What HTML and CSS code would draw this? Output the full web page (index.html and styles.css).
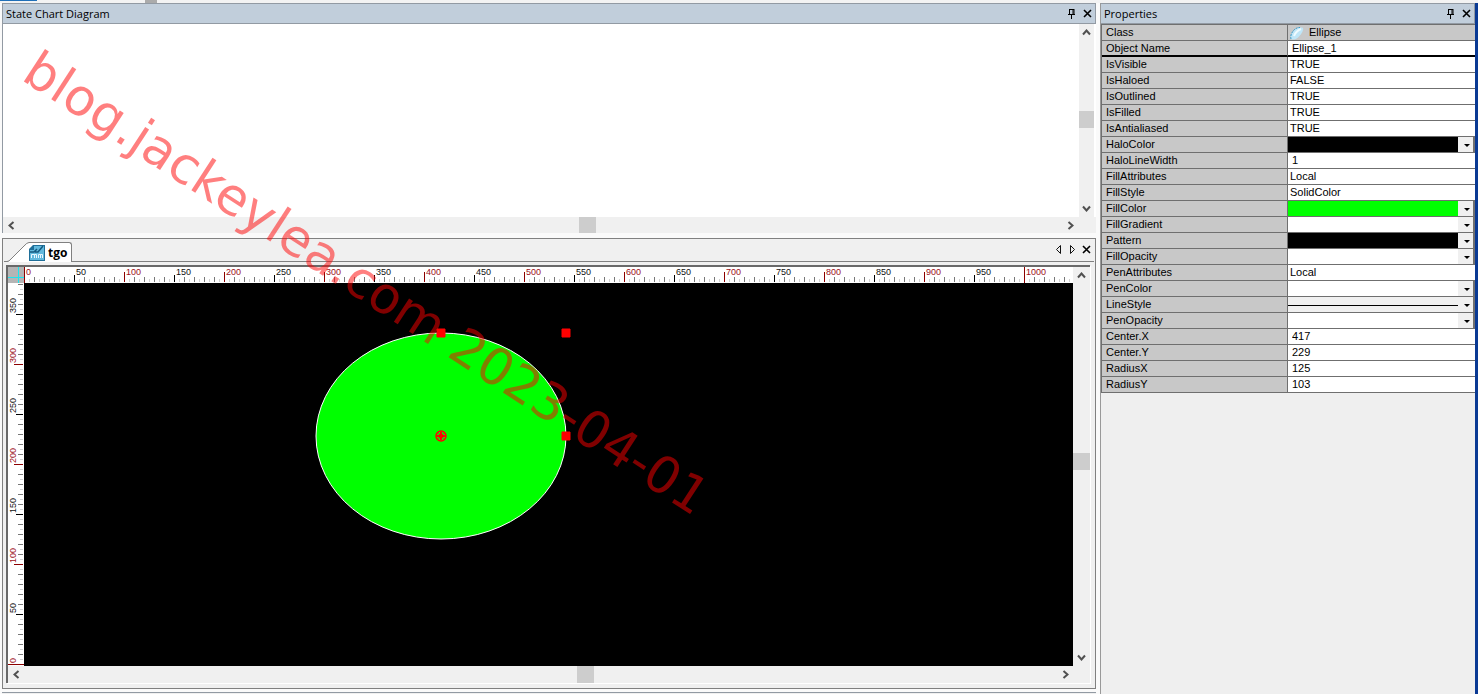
FILE: index.html
```html
<!DOCTYPE html>
<html lang="en">
<head>
<meta charset="utf-8">
<title>State Chart Diagram</title>
<link rel="stylesheet" href="styles.css">
</head>
<body>
<div class="strip"><span class="strip-active"></span><span class="strip-grip"></span></div>
<div class="workspace">
  <main class="left">
    <section class="chart">
      <header class="titlebar">
        <h2>State Chart Diagram</h2>
        <button class="icon-btn" aria-label="Pin diagram"><svg width="9" height="11" viewBox="0 0 9 11"><path d="M2.500 1v5M2 1.500h5M6 1v5M7 1v5M1 6.500h7M4.500 7v4" class="ink"/></svg></button>
        <button class="icon-btn" aria-label="Close diagram"><svg width="9" height="9" viewBox="0 0 9 9"><path d="M1 1l7 7M8 1l-7 7" class="ink thick"/></svg></button>
      </header>
      <div class="chart-body">
        <div class="chart-page"></div>
        <div class="vbar">
          <button aria-label="Scroll chart up"><svg width="9" height="7" viewBox="0 0 9 7"><path d="M1 5.500l3.500-4 3.500 4" class="chev"/></svg></button>
          <i class="v-before"></i><i class="thumb"></i><i class="v-after"></i>
          <button aria-label="Scroll chart down"><svg width="9" height="7" viewBox="0 0 9 7"><path d="M1 1.500l3.500 4 3.500-4" class="chev"/></svg></button>
        </div>
      </div>
      <div class="hbar chart-hbar">
        <button aria-label="Scroll chart left"><svg width="7" height="9" viewBox="0 0 7 9"><path d="M5.500 1l-4 3.500 4 3.500" class="chev"/></svg></button>
        <i class="h-before"></i><i class="thumb"></i><i class="h-after"></i>
        <button aria-label="Scroll chart right"><svg width="7" height="9" viewBox="0 0 7 9"><path d="M1.500 1l4 3.500-4 3.500" class="chev"/></svg></button>
      </div>
    </section>

    <section class="editor">
      <div class="tabs">
        <button class="tab">
          <svg class="tab-slope" width="22" height="20" viewBox="0 0 22 20"><path d="M0 20L2 19 17 4Q19 1 22 1V20Z" fill="#fff"/><path d="M0 19.500Q2 19.500 4 17L17 4Q20 .5 22 .5" fill="none" stroke="#808080"/></svg>
          <span class="tab-face">
            <svg width="16" height="16" viewBox="0 0 16 16"><path d="M0 4l4-4h12v16H0z" fill="#1f6f99"/><path d="M1 5h4V1h10v14H1z" fill="#62b9dd"/><path d="M1 7h4l3-3M6 7h3l5-6" fill="none" stroke="#145a80" stroke-width="1.500"/><path d="M2.500 13V9.500h3V13M5.500 9.500h2V13M9.500 13V9.500h2V13M11.500 9.500h2V13" fill="none" stroke="#e8f7ff"/></svg>
            <span>tgo</span>
          </span>
        </button>
        <span class="tab-fill"></span>
        <button class="nav-btn" aria-label="Previous tab"><svg width="7" height="9" viewBox="0 0 7 9"><path d="M5.500 .5v8l-4-4z" fill="none" stroke="#111"/></svg></button>
        <button class="nav-btn" aria-label="Next tab"><svg width="7" height="9" viewBox="0 0 7 9"><path d="M1.500 .5v8l4-4z" fill="none" stroke="#111"/></svg></button>
        <button class="nav-btn" aria-label="Close tab"><svg width="9" height="9" viewBox="0 0 9 9"><path d="M1 1l7 7M8 1l-7 7" class="ink thick"/></svg></button>
      </div>
      <div class="frame">
        <svg class="corner" width="16" height="16" viewBox="0 0 16 16"><rect width="16" height="16" fill="#b5b5b5"/><path d="M10.500 0v16M0 10.500h16" stroke="#1ce6ee"/></svg>
        <svg class="ruler-x" height="16">
          <defs><pattern id="tx" width="100" height="16" patternUnits="userSpaceOnUse">
            <path d="M5.500 12v3M15.500 12v3M25.500 12v3M35.500 12v3M45.500 12v3M55.500 12v3M65.500 12v3M75.500 12v3M85.500 12v3M95.500 12v3" stroke="#d0d0d0"/>
            <path d="M10.500 10v5M20.500 10v5M30.500 10v5M40.500 10v5M60.500 10v5M70.500 10v5M80.500 10v5M90.500 10v5" stroke="#777"/>
            <path d="M50.500 8v7" stroke="#000"/><path d="M.5 5v10" stroke="#8b0000"/>
          </pattern></defs>
          <rect width="100%" height="16" fill="#fff"/><rect width="100%" height="16" fill="url(#tx)"/>
          <path d="M.5 0v16M1000.500 0v16" stroke="#8b0000"/>
          <g class="num"><text x="52" y="8">50</text><text x="152" y="8">150</text><text x="252" y="8">250</text><text x="352" y="8">350</text><text x="452" y="8">450</text><text x="552" y="8">550</text><text x="652" y="8">650</text><text x="752" y="8">750</text><text x="852" y="8">850</text><text x="952" y="8">950</text></g>
          <g class="num major"><text x="2" y="8">0</text><text x="102" y="8">100</text><text x="202" y="8">200</text><text x="302" y="8">300</text><text x="402" y="8">400</text><text x="502" y="8">500</text><text x="602" y="8">600</text><text x="702" y="8">700</text><text x="802" y="8">800</text><text x="902" y="8">900</text><text x="1002" y="8">1000</text></g>
        </svg>
        <div class="vbar frame-vbar">
          <button aria-label="Scroll canvas up"><svg width="9" height="7" viewBox="0 0 9 7"><path d="M1 5.500l3.500-4 3.500 4" class="chev"/></svg></button>
          <i class="v-before"></i><i class="thumb"></i><i class="v-after"></i>
          <button aria-label="Scroll canvas down"><svg width="9" height="7" viewBox="0 0 9 7"><path d="M1 1.500l3.500 4 3.500-4" class="chev"/></svg></button>
        </div>
        <svg class="ruler-y" width="16">
          <defs><pattern id="ty" y="81" width="16" height="100" patternUnits="userSpaceOnUse">
            <path d="M12 5.500h3M12 15.500h3M12 25.500h3M12 35.500h3M12 45.500h3M12 55.500h3M12 65.500h3M12 75.500h3M12 85.500h3M12 95.500h3" stroke="#d0d0d0"/>
            <path d="M10 10.500h5M10 20.500h5M10 30.500h5M10 40.500h5M10 60.500h5M10 70.500h5M10 80.500h5M10 90.500h5" stroke="#777"/>
            <path d="M8 50.500h7" stroke="#000"/><path d="M6 .5h9" stroke="#8b0000"/>
          </pattern></defs>
          <rect width="16" height="100%" fill="#fff"/><rect width="16" height="100%" fill="url(#ty)"/>
          <path d="M0 381.500h16" stroke="#8b0000"/>
          <g class="num" transform="rotate(-90)"><text x="-30" y="8">350</text><text x="-130" y="8">250</text><text x="-230" y="8">150</text><text x="-330" y="8">50</text></g>
          <g class="num major" transform="rotate(-90)"><text x="-80" y="8">300</text><text x="-180" y="8">200</text><text x="-280" y="8">100</text><text x="-380" y="8">0</text></g>
        </svg>
        <svg class="canvas" role="img" aria-label="Green ellipse">
          <ellipse cx="417" cy="153" rx="125" ry="103" fill="#0f0" stroke="#fff"/>
          <path d="M413 46h8v8h-8zM538 46h8v8h-8zM538 149h8v8h-8z" fill="#f00" stroke="#f00"/>
          <circle cx="417" cy="153" r="5" fill="#0f0" stroke="#f00" stroke-width="1.500"/>
          <path d="M417 149v8M413 153h8" stroke="#f00" stroke-width="2"/>
          <path d="M414.500 150.500l5 5M419.500 150.500l-5 5" stroke="#f00"/>
        </svg>
        <div class="hbar frame-hbar">
          <button aria-label="Scroll canvas left"><svg width="7" height="9" viewBox="0 0 7 9"><path d="M5.500 1l-4 3.500 4 3.500" class="chev"/></svg></button>
          <i class="h-before"></i><i class="thumb"></i><i class="h-after"></i>
          <button aria-label="Scroll canvas right"><svg width="7" height="9" viewBox="0 0 7 9"><path d="M1.500 1l4 3.500-4 3.500" class="chev"/></svg></button>
        </div>
      </div>
    </section>
    <div class="next-panel"></div>
  </main>

  <aside class="props">
    <header class="titlebar">
      <h2>Properties</h2>
      <button class="icon-btn" aria-label="Pin properties"><svg width="9" height="11" viewBox="0 0 9 11"><path d="M2.500 1v5M2 1.500h5M6 1v5M7 1v5M1 6.500h7M4.500 7v4" class="ink"/></svg></button>
      <button class="icon-btn" aria-label="Close properties"><svg width="9" height="9" viewBox="0 0 9 9"><path d="M1 1l7 7M8 1l-7 7" class="ink thick"/></svg></button>
    </header>
    <table>
      <tr><th scope="row">Class</th><td class="shade"><span class="class-cell"><svg width="14" height="14" viewBox="0 0 14 14"><path d="M1 13C-.5 9 4 1 12 1.500 15 2 12 8 8 11.500 5 14 2 14 1 13z" fill="#bfe6f8"/><path d="M1 13C-.5 9 4 1 10 1.500" fill="none" stroke="#3a9dcc" stroke-dasharray="2 1"/><path d="M4 10Q6 5 11 3" stroke="#effbff" stroke-width="2" fill="none"/></svg>Ellipse</span></td></tr>
      <tr class="keyline"><th scope="row"><label for="name">Object Name</label></th><td><input id="name" type="text" value="Ellipse_1"></td></tr>
      <tr><th scope="row">IsVisible</th><td>TRUE</td></tr>
      <tr><th scope="row">IsHaloed</th><td>FALSE</td></tr>
      <tr><th scope="row">IsOutlined</th><td>TRUE</td></tr>
      <tr><th scope="row">IsFilled</th><td>TRUE</td></tr>
      <tr><th scope="row">IsAntialiased</th><td>TRUE</td></tr>
      <tr><th scope="row"><label for="halo">HaloColor</label></th><td class="combo"><select id="halo" class="black"><option></option></select></td></tr>
      <tr><th scope="row"><label for="halow">HaloLineWidth</label></th><td><input id="halow" type="text" value="1"></td></tr>
      <tr><th scope="row">FillAttributes</th><td>Local</td></tr>
      <tr><th scope="row">FillStyle</th><td>SolidColor</td></tr>
      <tr><th scope="row"><label for="fill">FillColor</label></th><td class="combo"><select id="fill" class="green"><option></option></select></td></tr>
      <tr><th scope="row"><label for="grad">FillGradient</label></th><td class="combo"><select id="grad"><option></option></select></td></tr>
      <tr><th scope="row"><label for="pat">Pattern</label></th><td class="combo"><select id="pat" class="black"><option></option></select></td></tr>
      <tr><th scope="row"><label for="fop">FillOpacity</label></th><td class="combo"><select id="fop"><option></option></select></td></tr>
      <tr><th scope="row">PenAttributes</th><td>Local</td></tr>
      <tr><th scope="row"><label for="pen">PenColor</label></th><td class="combo"><select id="pen"><option></option></select></td></tr>
      <tr><th scope="row"><label for="line">LineStyle</label></th><td class="combo"><select id="line" class="line"><option></option></select></td></tr>
      <tr><th scope="row"><label for="pop">PenOpacity</label></th><td class="combo"><select id="pop"><option></option></select></td></tr>
      <tr><th scope="row"><label for="cx">Center.X</label></th><td><input id="cx" type="text" value="417"></td></tr>
      <tr><th scope="row"><label for="cy">Center.Y</label></th><td><input id="cy" type="text" value="229"></td></tr>
      <tr><th scope="row"><label for="rx">RadiusX</label></th><td><input id="rx" type="text" value="125"></td></tr>
      <tr><th scope="row"><label for="ry">RadiusY</label></th><td><input id="ry" type="text" value="103"></td></tr>
    </table>
  </aside>
</div>
<svg class="watermark"><text transform="translate(20 79) rotate(33)">blog.jackeylea.com 2023-04-01</text></svg>
</body>
</html>
```
FILE: styles.css
```css
* { box-sizing: border-box; }
body {
  margin: 0;
  height: 100vh;
  display: flex;
  flex-direction: column;
  overflow: hidden;
  background: #fafafa;
  color: #000;
  font: 11px/15px "Liberation Sans", Arial, sans-serif;
}
button { border: 0; padding: 0; background: none; color: inherit; display: flex; align-items: center; justify-content: center; }
svg { display: block; flex: none; }
.ink { fill: none; stroke: #000; }
.thick { stroke-width: 1.6; }
.chev { fill: none; stroke: #505050; stroke-width: 2; }

.strip { height: 3px; flex: none; display: flex; background: #f3f3f3; }
.strip-active { width: 37px; height: 1px; background: #1f6fb8; margin-right: 108px; }
.strip-grip { width: 12px; background: #ababab; }

.workspace {
  flex: 1;
  min-height: 0;
  display: flex;
  gap: 4px;
  padding-left: 2px;
  border-right: 3px solid #0a3a94;
}
.left { flex: 1094 1 0; min-width: 0; display: flex; flex-direction: column; }
.props { flex: 374 1 0; min-width: 0; background: #efefef; border-left: 1px solid #999; }

.titlebar {
  height: 21px;
  flex: none;
  display: flex;
  align-items: center;
  gap: 7px;
  padding: 0 3px;
  background: #c1cedb;
  border: 1px solid #929aa3;
  border-width: 1px 1px 1px 0;
}
.titlebar h2 { flex: 1; margin: 0; font: 11px/18px "Open Sans", "Noto Sans", sans-serif; }
.icon-btn { width: 9px; height: 18px; }

.chart { flex: 231 1 0; min-height: 0; display: flex; flex-direction: column; border-left: 1px solid #929aa3; }
.chart-body { flex: 1; min-height: 0; display: flex; background: #fff; padding-right: 2px; }
.chart-page { flex: 1; }
.vbar { width: 15px; display: flex; flex-direction: column; background: #f0f0f0; }
.vbar button { height: 17px; flex: none; }
.vbar .thumb { height: 17px; }
.hbar { height: 16px; flex: none; display: flex; background: #f0f0f0; }
.hbar button { width: 16px; flex: none; }
.hbar .thumb { width: 17px; }
.thumb { flex: none; background: #cdcdcd; }
.h-before { flex: 560 1 0; }
.h-after { flex: 466 1 0; }
.v-before { flex: 70 1 0; }
.v-after { flex: 72 1 0; }
.chart-hbar { padding-right: 18px; }

.editor {
  flex: 442 1 0;
  min-height: 0;
  margin-top: 5px;
  display: flex;
  flex-direction: column;
  border: 1px solid #808080;
  background: #f0f0f0;
  padding: 3px 1px 5px;
}
.tabs { height: 20px; flex: none; display: flex; align-items: stretch; margin-bottom: 3px; border-bottom: 1px solid #808080; }
.tab { align-items: stretch; height: 20px; margin-left: 3px; }
.tab-face {
  display: flex;
  align-items: center;
  gap: 3px;
  padding: 0 4px 0 0;
  border: 1px solid #808080;
  border-width: 1px 1px 0 0;
  border-radius: 0 3px 0 0;
  background: #fff;
  font: bold 12px/18px "Open Sans", "Noto Sans", sans-serif;
}
.tab-fill { flex: 1; }
.nav-btn { width: 14px; height: 14px; }
.nav-btn:last-child { margin-right: 1px; }

.frame {
  flex: 1;
  min-height: 0;
  margin: 0 4px 0 2px;
  display: grid;
  grid-template: 16px minmax(0, 1fr) 17px / 16px minmax(0, 1fr) 17px;
  border: solid #696969;
  border-width: 2px 0 0 2px;
  box-shadow: 1px 1px 0 #fff;
}
.ruler-x { width: 100%; }
.ruler-y { grid-column: 1; grid-row: 2; height: 100%; }
.frame-vbar { grid-column: 3; grid-row: 1 / 3; width: 17px; }
.frame-vbar .v-before { flex: 168 1 0; }
.frame-vbar .v-after { flex: 179 1 0; }
.canvas { grid-column: 2; grid-row: 2; width: 100%; height: 100%; background: #000; }
.frame-hbar { grid-column: 1 / 4; grid-row: 3; height: 17px; padding-right: 17px; }
.frame-hbar .h-before { flex: 553 1 0; }
.frame-hbar .h-after { flex: 463 1 0; }
.num { font: 9px "Liberation Sans", Arial, sans-serif; fill: #111; }
.major { fill: #9b1020; }
.next-panel { height: 2px; margin-top: 3px; flex: none; background: #f0f0f0; border-top: 1px solid #929aa3; }

table { width: 100%; table-layout: fixed; border-collapse: separate; border-spacing: 0; border: 1px solid #6f6f6f; border-width: 1px 0 0 1px; background: #fff; }
th, td { height: 16px; padding: 0 2px; border-bottom: 1px solid #6f6f6f; text-align: left; font-weight: normal; white-space: nowrap; }
th { width: 186px; padding-left: 4px; background: #c8c8c8; border-right: 1px solid #6f6f6f; }
label { display: block; }
.shade { background: #c8c8c8; }
.class-cell { display: flex; gap: 5px; height: 15px; align-items: center; }
.keyline th, .keyline td { border-bottom: 2px solid #000; line-height: 14px; }
input { display: block; width: 100%; height: 14px; padding: 0 2px; border: 0; background: none; font: inherit; color: inherit; }
.combo { padding: 0; position: relative; }
select { appearance: none; display: block; width: calc(100% - 15px); height: 15px; border: 0; border-radius: 0; padding: 0; background: #fff; }
.combo::before { content: ""; position: absolute; right: 0; top: 0; width: 15px; height: 15px; background: #f0f0f0; border: 1px solid #707070; border-width: 0 2px 1px 0; pointer-events: none; }
.combo::after { content: ""; position: absolute; right: 5px; top: 7px; border: 3px solid transparent; border-top-color: #000; border-bottom: 0; pointer-events: none; }
.black { background: #000; }
.green { background: #0f0; }
.line { background: linear-gradient(#000, #000) 0 8px / 100% 1px no-repeat #f0f0f0; }

.watermark { position: absolute; inset: 0; width: 100%; height: 100%; pointer-events: none; }
.watermark text { font: 51px "DejaVu Sans", sans-serif; fill: #f00; fill-opacity: .5; }
```
